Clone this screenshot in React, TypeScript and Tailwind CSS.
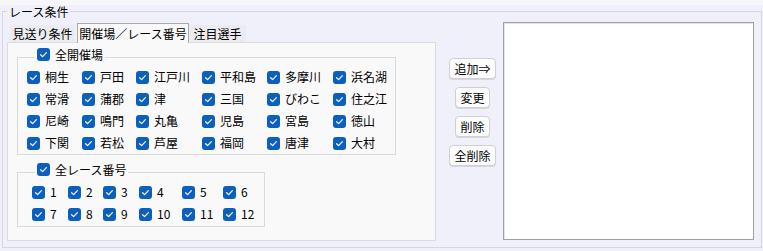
import React from "react";

const FONT = { fontFamily: '"Noto Sans CJK JP", "Noto Sans", sans-serif' };

function Check() {
  return (
    <span className="flex h-[13px] w-[13px] shrink-0 items-center justify-center rounded-[3px] bg-[#0b5fbf]">
      <svg width="13" height="13" viewBox="0 0 13 13">
        <path d="M3.6 6.7 L5.6 8.6 L9.4 4.6" fill="none" stroke="#ffffff" strokeWidth="1.2" strokeLinecap="round" strokeLinejoin="round" />
      </svg>
    </span>
  );
}

function Item({ label }: { label: string }) {
  return (
    <div className="flex h-[22px] items-center gap-[5px]">
      <Check />
      <span className="text-[12px] leading-[14px] text-[#000000] whitespace-nowrap">{label}</span>
    </div>
  );
}

const venues = [
  "桐生", "戸田", "江戸川", "平和島", "多摩川", "浜名湖",
  "常滑", "蒲郡", "津", "三国", "びわこ", "住之江",
  "尼崎", "鳴門", "丸亀", "児島", "宮島", "徳山",
  "下関", "若松", "芦屋", "福岡", "唐津", "大村",
];

const races = ["1", "2", "3", "4", "5", "6", "7", "8", "9", "10", "11", "12"];

function Btn({ label, w }: { label: string; w: string }) {
  return (
    <button
      className={`${w} h-[21px] rounded-[4px] border border-[#cfcfd6] bg-[#fdfdfd] text-[12px] leading-[14px] text-[#000000] shadow-[0_1px_0_#d6d6dc]`}
    >
      {label}
    </button>
  );
}

export default function App() {
  return (
    <div className="h-[251px] w-[763px] overflow-hidden bg-[#f0f0fb]" style={FONT}>
      <div className="h-[5px] bg-[#f7f7f9]" />
      <fieldset className="ml-[2px] h-[243px] w-[760px] border border-[#d6d6e4] p-0">
        <legend className="ml-[4px] px-[2px] text-[12px] leading-[13px] text-[#000000]">レース条件</legend>
        <div className="flex pl-[4px] pt-[5px]">
          {/* Tab control */}
          <div className="flex w-[429px] flex-col">
            <div className="flex h-[19px] items-start pl-[3px]">
              <div className="mt-[2px] flex h-[17px] w-[65px] items-center justify-center bg-[#ececf0] text-[12px] leading-[14px] text-[#000000]">
                見送り条件
              </div>
              <div className="relative z-10 ml-[2px] flex h-[20px] w-[112px] items-center justify-center border border-b-0 border-[#a9a9a9] bg-[#f9f9f9] text-[12px] leading-[14px] text-[#000000]">
                開催場／レース番号
              </div>
              <div className="mt-[2px] flex h-[17px] w-[57px] items-center justify-center bg-[#ececf0] text-[12px] leading-[14px] text-[#000000]">
                注目選手
              </div>
            </div>
            <div className="h-[199px] border border-[#dcdcdc] bg-[#f9f9f9] pl-[9px] pt-[5px]">
              <fieldset className="w-[379px] border border-[#d9d9d9] p-0">
                <legend className="ml-[17px] flex h-[18px] items-start gap-[5px] px-[2px]">
                  <Check />
                  <span className="text-[12px] leading-[14px] text-[#000000]">全開催場</span>
                </legend>
                <div className="grid grid-cols-[55px_54px_66px_65px_66px_1fr] pl-[9px]">
                  {venues.map((v) => (
                    <Item key={v} label={v} />
                  ))}
                </div>
              </fieldset>
              <fieldset className="mt-[8px] w-[248px] border border-[#d9d9d9] p-0 pb-[1px]">
                <legend className="ml-[17px] flex h-[18px] items-start gap-[5px] px-[2px]">
                  <Check />
                  <span className="text-[12px] leading-[14px] text-[#000000]">全レース番号</span>
                </legend>
                <div className="grid grid-cols-[36px_35px_36px_43px_41px_1fr] pl-[14px]">
                  {races.map((r) => (
                    <Item key={r} label={r} />
                  ))}
                </div>
              </fieldset>
            </div>
          </div>
          {/* Buttons */}
          <div className="flex w-[67px] flex-col items-center gap-[8px] pl-[6px] pt-[35px]">
            <Btn label="追加⇒" w="w-[47px]" />
            <Btn label="変更" w="w-[35px]" />
            <Btn label="削除" w="w-[35px]" />
            <Btn label="全削除" w="w-[47px]" />
          </div>
          {/* List box */}
          <div className="-mt-[1px] h-[218px] w-[251px] border border-[#a0a0a8] bg-white shadow-[inset_1px_1px_0_#e4e4e8]" />
        </div>
      </fieldset>
    </div>
  );
}
